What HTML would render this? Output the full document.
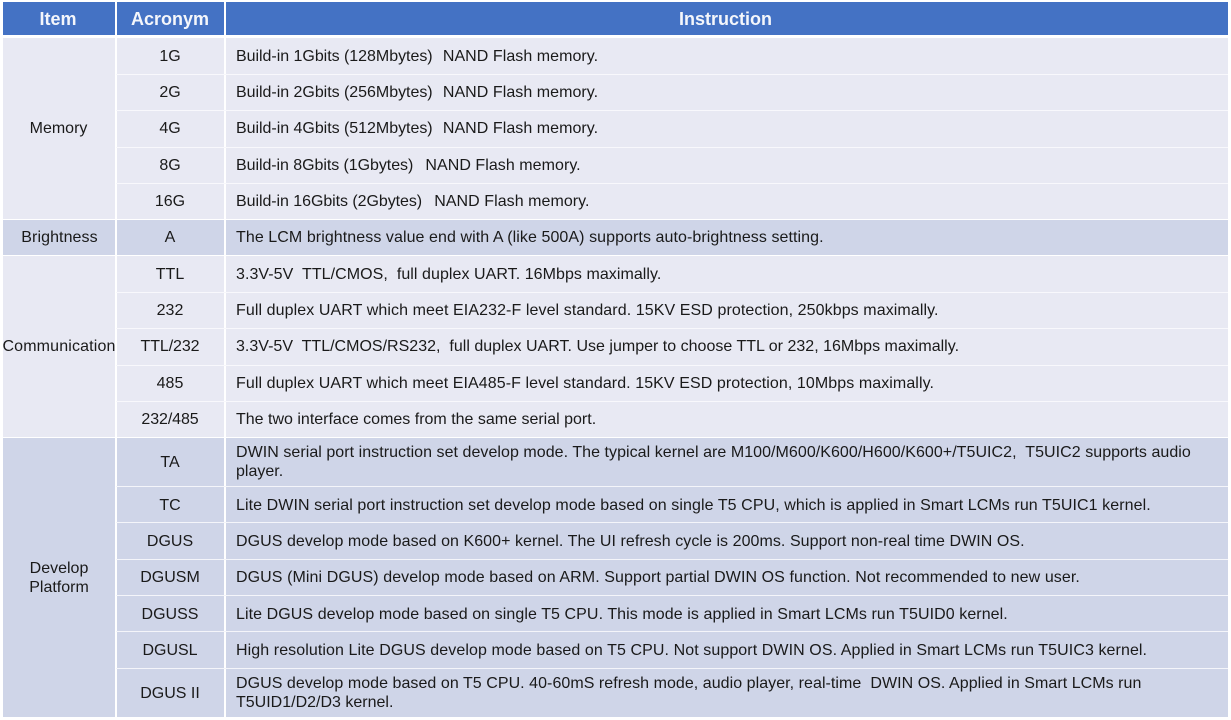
<!DOCTYPE html>
<html><head><meta charset="utf-8"><style>
html,body{margin:0;padding:0;background:#fff}
body{width:1231px;height:720px;position:relative;overflow:hidden;font-family:"Liberation Sans",sans-serif;font-size:16px;color:#222}
.b{position:absolute}
.t{position:absolute;white-space:pre;line-height:20px;height:20px;color:#1a1a1a}
.c{transform:translateX(-50%)}
.h{font-weight:bold;color:#f4f6fb;font-size:18px}
.g{margin-left:-3px;letter-spacing:.05px}
</style></head><body>
<div class="b" style="left:3px;top:2px;width:1225px;height:33px;background:#4472c4"></div>
<div class="b" style="left:3px;top:38px;width:1225px;height:181px;background:#e8e9f3"></div>
<div class="b" style="left:3px;top:220px;width:1225px;height:35px;background:#cfd5e8"></div>
<div class="b" style="left:3px;top:256px;width:1225px;height:181px;background:#e8e9f3"></div>
<div class="b" style="left:3px;top:438px;width:1225px;height:279px;background:#cfd5e8"></div>
<div class="b" style="left:115px;top:2px;width:1.5px;height:715px;background:#fff"></div>
<div class="b" style="left:224px;top:2px;width:1.5px;height:715px;background:#fff"></div>
<div class="b" style="left:116px;top:74px;width:1112px;height:1px;background:#f8f8fc"></div>
<div class="b" style="left:116px;top:110px;width:1112px;height:1px;background:#f8f8fc"></div>
<div class="b" style="left:116px;top:147px;width:1112px;height:1px;background:#f8f8fc"></div>
<div class="b" style="left:116px;top:183px;width:1112px;height:1px;background:#f8f8fc"></div>
<div class="b" style="left:116px;top:292px;width:1112px;height:1px;background:#f8f8fc"></div>
<div class="b" style="left:116px;top:328px;width:1112px;height:1px;background:#f8f8fc"></div>
<div class="b" style="left:116px;top:365px;width:1112px;height:1px;background:#f8f8fc"></div>
<div class="b" style="left:116px;top:401px;width:1112px;height:1px;background:#f8f8fc"></div>
<div class="b" style="left:116px;top:486px;width:1112px;height:1px;background:#f4f5fa"></div>
<div class="b" style="left:116px;top:522px;width:1112px;height:1px;background:#f4f5fa"></div>
<div class="b" style="left:116px;top:559px;width:1112px;height:1px;background:#f4f5fa"></div>
<div class="b" style="left:116px;top:595px;width:1112px;height:1px;background:#f4f5fa"></div>
<div class="b" style="left:116px;top:631px;width:1112px;height:1px;background:#f4f5fa"></div>
<div class="b" style="left:116px;top:668px;width:1112px;height:1px;background:#f4f5fa"></div>

<div class="t c h" style="left:58px;top:9px">Item</div>
<div class="t c h" style="left:170px;top:9px">Acronym</div>
<div class="t c h" style="left:725.5px;top:9px">Instruction</div>

<div class="t c" style="left:58.5px;top:119px">Memory</div>
<div class="t c" style="left:59.5px;top:228px;letter-spacing:.08px">Brightness</div>
<div class="t c" style="left:59px;top:337px;letter-spacing:.15px">Communication</div>
<div class="t c" style="left:59px;top:559px">Develop</div>
<div class="t c" style="left:59px;top:578px">Platform</div>

<div class="t c" style="left:170px;top:47px">1G</div>
<div class="t c" style="left:170px;top:83px">2G</div>
<div class="t c" style="left:170px;top:119px">4G</div>
<div class="t c" style="left:170px;top:156px">8G</div>
<div class="t c" style="left:170px;top:192px">16G</div>
<div class="t c" style="left:170px;top:228px">A</div>
<div class="t c" style="left:170px;top:265px">TTL</div>
<div class="t c" style="left:170px;top:301px">232</div>
<div class="t c" style="left:170px;top:337px;letter-spacing:-.1px">TTL/232</div>
<div class="t c" style="left:170px;top:374px">485</div>
<div class="t c" style="left:170px;top:410px;letter-spacing:-.1px">232/485</div>
<div class="t c" style="left:170px;top:453px">TA</div>
<div class="t c" style="left:170px;top:496px">TC</div>
<div class="t c" style="left:170px;top:532px">DGUS</div>
<div class="t c" style="left:170px;top:568px">DGUSM</div>
<div class="t c" style="left:170px;top:605px">DGUSS</div>
<div class="t c" style="left:170px;top:641px">DGUSL</div>
<div class="t c" style="left:170px;top:684px">DGUS II</div>

<div class="t" style="left:236px;top:47px;letter-spacing:-.03px">Build-in 1Gbits (128Mbytes)   <span class="g">NAND Flash memory.</span></div>
<div class="t" style="left:236px;top:83px;letter-spacing:-.03px">Build-in 2Gbits (256Mbytes)   <span class="g">NAND Flash memory.</span></div>
<div class="t" style="left:236px;top:119px;letter-spacing:-.03px">Build-in 4Gbits (512Mbytes)   <span class="g">NAND Flash memory.</span></div>
<div class="t" style="left:236px;top:156px;letter-spacing:-.06px">Build-in 8Gbits (1Gbytes)   <span class="g" style="margin-left:-1px">NAND Flash memory.</span></div>
<div class="t" style="left:236px;top:192px;letter-spacing:-.06px">Build-in 16Gbits (2Gbytes)   <span class="g" style="margin-left:-1px">NAND Flash memory.</span></div>
<div class="t" style="left:236px;top:228px;letter-spacing:.074px">The LCM brightness value end with A (like 500A) supports auto-brightness setting.</div>
<div class="t" style="left:236px;top:265px;letter-spacing:.055px">3.3V-5V  TTL/CMOS,  full duplex UART. 16Mbps maximally.</div>
<div class="t" style="left:236px;top:301px;letter-spacing:.087px">Full duplex UART which meet EIA232-F level standard. 15KV ESD protection, 250kbps maximally.</div>
<div class="t" style="left:236px;top:337px;letter-spacing:.01px">3.3V-5V  TTL/CMOS/RS232,  full duplex UART. Use jumper to choose TTL or 232, 16Mbps maximally.</div>
<div class="t" style="left:236px;top:374px;letter-spacing:.077px">Full duplex UART which meet EIA485-F level standard. 15KV ESD protection, 10Mbps maximally.</div>
<div class="t" style="left:236px;top:410px">The two interface comes from the same serial port.</div>
<div class="t" style="left:236px;top:443px;letter-spacing:.048px">DWIN serial port instruction set develop mode. The typical kernel are M100/M600/K600/H600/K600+/T5UIC2,  T5UIC2 supports audio</div>
<div class="t" style="left:236px;top:462px">player.</div>
<div class="t" style="left:236px;top:496px;letter-spacing:.081px">Lite DWIN serial port instruction set develop mode based on single T5 CPU, which is applied in Smart LCMs run T5UIC1 kernel.</div>
<div class="t" style="left:236px;top:532px;letter-spacing:.058px">DGUS develop mode based on K600+ kernel. The UI refresh cycle is 200ms. Support non-real time DWIN OS.</div>
<div class="t" style="left:236px;top:568px;letter-spacing:.084px">DGUS (Mini DGUS) develop mode based on ARM. Support partial DWIN OS function. Not recommended to new user.</div>
<div class="t" style="left:236px;top:605px;letter-spacing:.079px">Lite DGUS develop mode based on single T5 CPU. This mode is applied in Smart LCMs run T5UID0 kernel.</div>
<div class="t" style="left:236px;top:641px;letter-spacing:.085px">High resolution Lite DGUS develop mode based on T5 CPU. Not support DWIN OS. Applied in Smart LCMs run T5UIC3 kernel.</div>
<div class="t" style="left:236px;top:674px;letter-spacing:.05px">DGUS develop mode based on T5 CPU. 40-60mS refresh mode, audio player, real-time  DWIN OS. Applied in Smart LCMs run</div>
<div class="t" style="left:236px;top:693px">T5UID1/D2/D3 kernel.</div>
</body></html>
